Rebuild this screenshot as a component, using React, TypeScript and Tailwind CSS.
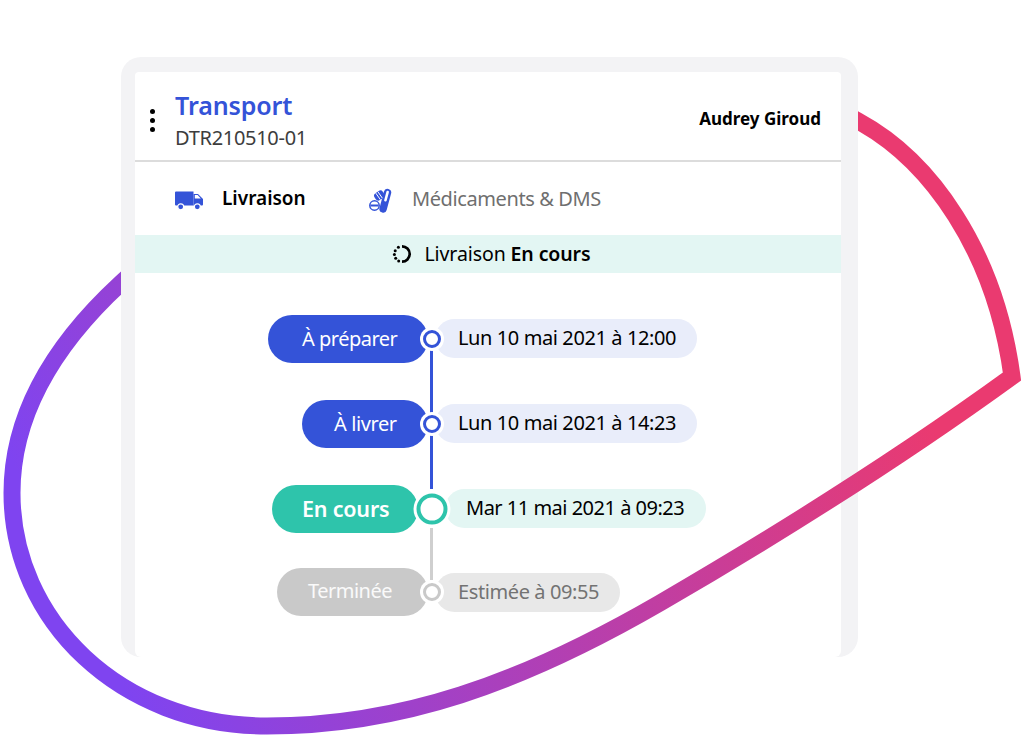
const STEPS = [
  {
    label: "À préparer",
    date: "Lun 10 mai 2021 à 12:00",
    pill: "w-[160px] mr-0 bg-[#3453d8] text-white pl-[34px] text-[20px] tracking-[-0.5px]",
    datePill: "w-[262px] ml-[7px] mb-[2px] bg-[#e9edfa] text-black pl-[23px] tracking-[-0.4px]",
    dot: "w-[18px] h-[18px] border-[3px] border-[#3453d8]",
    row: "",
  },
  {
    label: "À livrer",
    date: "Lun 10 mai 2021 à 14:23",
    pill: "w-[126px] mr-0 bg-[#3453d8] text-white pl-[32px] text-[20px] tracking-[-0.4px]",
    datePill: "w-[262px] ml-[7px] mb-[2px] bg-[#e9edfa] text-black pl-[23px] tracking-[-0.4px]",
    dot: "w-[18px] h-[18px] border-[3px] border-[#3453d8]",
    row: "mt-[37px]",
  },
  {
    label: "En cours",
    date: "Mar 11 mai 2021 à 09:23",
    pill: "w-[146px] mr-[10px] bg-[#2ec4ab] text-white pl-[30px] text-[21.500px] font-semibold tracking-[-0.2px]",
    datePill: "w-[261px] ml-[17px] mb-[2px] bg-[#e3f6f3] text-black pl-[21px] tracking-[-0.5px]",
    dot: "w-[31px] h-[31px] border-[4px] border-[#2ec4ab]",
    row: "mt-[37px]",
  },
  {
    label: "Terminée",
    date: "Estimée à 09:55",
    pill: "w-[151px] mr-0 bg-[#c9c9c9] text-white/90 pl-[31px] pb-[2px] text-[20px] tracking-[-0.5px]",
    datePill: "w-[185px] ml-[7px] bg-[#e8e8e8] text-[#737373] pl-[23px] tracking-[-0.4px]",
    dot: "w-[18px] h-[18px] border-[3px] border-[#c9c9c9]",
    row: "mt-[35px]",
  },
];

function Truck() {
  return (
    <svg width="30" height="20" viewBox="0 0 30 20" className="shrink-0 mt-[4px]">
      <path d="M1 0.500h17.500v14H1a1 1 0 0 1-1-1V1.500a1 1 0 0 1 1-1z" fill="#3453d8" />
      <path d="M18.500 3h4.500l5 5v5.500a1 1 0 0 1-1 1h-8.500z" fill="#3453d8" />
      <path d="M19.800 4h2.800l3.200 3.500h-6z" fill="#fff" />
      <circle cx="5.700" cy="15.800" r="3" fill="#3453d8" stroke="#fff" strokeWidth="1.200" />
      <circle cx="22.300" cy="15.800" r="3" fill="#3453d8" stroke="#fff" strokeWidth="1.200" />
    </svg>
  );
}

function Pills() {
  return (
    <svg width="24" height="28" viewBox="0 0 24 28" className="shrink-0">
      <g transform="rotate(15 16.300 15.800)">
        <rect x="12.600" y="3.500" width="7.400" height="24.500" rx="3.700" fill="#3453d8" />
        <rect x="15" y="5.500" width="2.600" height="11" rx="1.300" fill="#fff" />
      </g>
      <g transform="rotate(55 10.300 10.500)">
        <rect x="6.300" y="5.500" width="8" height="10" rx="3" fill="#3453d8" />
        <path d="M6.300 9.500h8M6.300 12h8" stroke="#fff" strokeWidth="0.900" />
      </g>
      <circle cx="5.500" cy="20.500" r="4.700" fill="#fff" stroke="#3453d8" strokeWidth="1.500" />
      <path d="M1.500 20.500h8" stroke="#3453d8" strokeWidth="2" />
    </svg>
  );
}

function Spinner() {
  return (
    <svg width="20" height="20" viewBox="0 0 20 20" className="shrink-0">
      <path d="M10 2.300a7.700 7.700 0 0 1 0 15.400" fill="none" stroke="#000" strokeWidth="2.700" />
      <circle cx="6.400" cy="3.300" r="1.500" />
      <circle cx="3.200" cy="6.700" r="1.500" />
      <circle cx="2.400" cy="10.500" r="1.500" />
      <circle cx="3.700" cy="14.200" r="1.500" />
      <circle cx="6.700" cy="17" r="1.500" />
    </svg>
  );
}

function Curve() {
  return (
    <svg width="1024" height="745" viewBox="0 0 1024 745" className="absolute inset-0 pointer-events-none">
      <defs>
        <linearGradient id="curve" gradientUnits="userSpaceOnUse" x1="100" y1="640" x2="856" y2="267">
          <stop offset="0" stopColor="#7f44f0" />
          <stop offset="1" stopColor="#ea3a70" />
        </linearGradient>
        {/* the two upper ends disappear behind the card */}
        <clipPath id="ends">
          <path d="M0 0H1024V745H0ZM121 0V400H858V0Z" clipRule="evenodd" />
        </clipPath>
      </defs>
      <path
        d="M832 107L858 121C930 160 995 250 1012 376.500C930 436 820 510 660 603C520 684 400 726 267 726C120 726 12 620 12 493C12 400 70 330 121 283L145 261"
        fill="none"
        stroke="url(#curve)"
        strokeWidth="17"
        strokeLinejoin="miter"
        clipPath="url(#ends)"
      />
    </svg>
  );
}

export default function App() {
  return (
    <div className="relative w-[1024px] h-[745px] bg-white overflow-hidden pt-[57px] pl-[121px] font-['Noto_Sans',sans-serif]">
      <div className="w-[737px] h-[600px] rounded-[20px] bg-[#f3f3f5] pt-[15px] pl-[14px]">
        <div className="w-[706px] h-[585px] rounded-t-[4px] rounded-b-[6px] bg-white">
          {/* Header */}
          <div className="h-[90px] flex items-center border-b-2 border-[#dcdcdc] pl-[15px] pr-[20px]">
            <div className="flex flex-col gap-[4px] w-[5px] mr-[20px] mt-[8px]">
              <span className="w-[5px] h-[5px] rounded-full bg-black" />
              <span className="w-[5px] h-[5px] rounded-full bg-black" />
              <span className="w-[5px] h-[5px] rounded-full bg-black" />
            </div>
            <div className="flex-1 pt-[8px]">
              <div className="text-[25px] leading-[34px] font-semibold tracking-[-0.1px] text-[#3453d8]">Transport</div>
              <div className="text-[20px] leading-[28px] tracking-[-0.3px] text-[#3d3d3d] mt-[2px]">DTR210510-01</div>
            </div>
            <div className="text-[17px] font-bold text-black mt-[6px]">Audrey Giroud</div>
          </div>

          {/* Tabs */}
          <div className="h-[73px] flex items-center pl-[40px]">
            <Truck />
            <span className="ml-[17px] w-[147px] text-[19px] font-semibold text-black">Livraison</span>
            <Pills />
            <span className="ml-[19px] text-[20px] tracking-[-0.4px] text-[#6f6f6f]">Médicaments & DMS</span>
          </div>

          {/* Status */}
          <div className="h-[38px] flex items-center justify-center gap-[13px] pl-[6px] bg-[#e3f6f3] text-[19.500px] tracking-[-0.1px] text-black">
            <Spinner />
            <span>
              Livraison <b className="font-semibold">En cours</b>
            </span>
          </div>

          {/* Timeline */}
          <div className="relative pt-[42px]">
            <div className="absolute left-[295px] top-[66px] w-[3px] h-[150px] bg-[#3453d8]" />
            <div className="absolute left-[295px] top-[255px] w-[3px] h-[52px] bg-[#cfcfcf]" />
            {STEPS.map((step) => (
              <div key={step.label} className={`relative flex items-center h-[48px] ${step.row}`}>
                <div className="w-[293px] flex justify-end">
                  <div className={`h-[48px] rounded-full flex items-center ${step.pill}`}>{step.label}</div>
                </div>
                <div className={`h-[39px] rounded-full flex items-center text-[20px] ${step.datePill}`}>{step.date}</div>
                <span
                  className={`absolute left-[296.500px] top-1/2 -translate-x-1/2 -translate-y-1/2 rounded-full bg-white ring-[3px] ring-white ${step.dot}`}
                />
              </div>
            ))}
          </div>
        </div>
      </div>
      <Curve />
    </div>
  );
}
